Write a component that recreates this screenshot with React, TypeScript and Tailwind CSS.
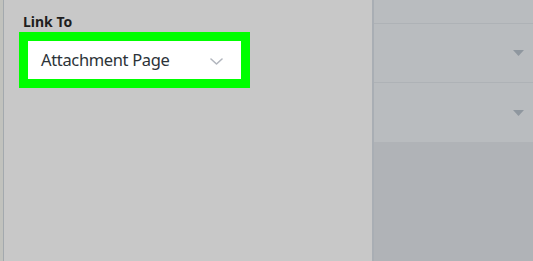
function Caret() {
    return (
        <svg width="11" height="6" viewBox="0 0 11 6" className="block">
            <path d="M0 0 L11 0 L5.5 6 Z" fill="#8f979f" />
        </svg>
    );
}

function Chevron() {
    return (
        <svg width="13" height="7" viewBox="0 0 13 7" className="block mt-[3px]">
            <path d="M1 1 L6.5 6 L12 1" fill="none" stroke="#b2b6be" strokeWidth="1.6" strokeLinecap="round" strokeLinejoin="round" />
        </svg>
    );
}

export default function App() {
    return (
        <div className="flex w-[533px] h-[261px] overflow-hidden bg-[#c8c8c8] font-['Noto_Sans',sans-serif]">
            {/* left edge */}
            <div className="w-[3px] bg-[#c1c2bd]" />
            <div className="w-px bg-[#a3a9ae]" />

            {/* attachment settings panel */}
            <div className="flex-1 flex flex-col pl-[15px] pt-[12px]">
                <p className="ml-1 text-[14px] leading-[20px] font-bold text-[#1e1e1e]">Link To</p>
                <div className="w-[231px] h-[56px] border-[9px] border-[#00ff00] bg-white flex items-center justify-between pl-[13px] pr-[18px]">
                    <span className="text-[16.5px] text-[#2c3338] tracking-[-0.35px] pt-[1px]">Attachment Page</span>
                    <Chevron />
                </div>
            </div>

            {/* divider */}
            <div className="w-[2px] bg-[#a9aeb4]" />

            {/* right column */}
            <div className="w-[159px] flex flex-col bg-[#b0b3b7]">
                <div className="h-[24px] bg-[#b9bcbf] border-b border-[#aeb2b6]" />
                <div className="h-[59px] bg-[#b9bcbf] border-b border-[#aeb2b6] flex items-center justify-end pr-[9px]">
                    <Caret />
                </div>
                <div className="h-[59px] bg-[#b9bcbf] flex items-center justify-end pr-[9px]">
                    <Caret />
                </div>
                <div className="flex-1" />
            </div>
        </div>
    );
}
